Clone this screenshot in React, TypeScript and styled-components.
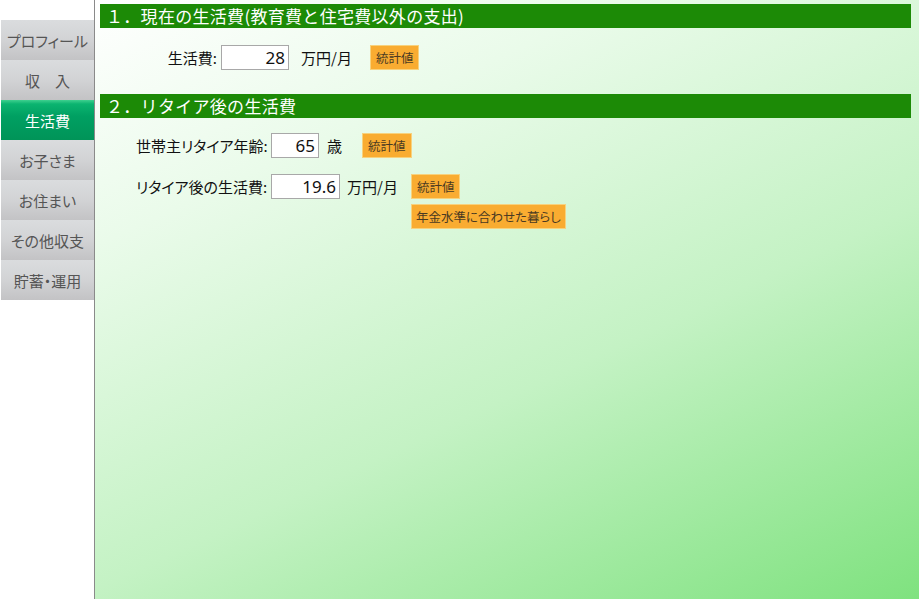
import React from "react";
import styled, { createGlobalStyle } from "styled-components";

const GlobalStyle = createGlobalStyle`
  html, body {
    margin: 0;
    padding: 0;
    height: 100%;
  }
  body {
    font-family: "Noto Sans CJK JP", "Noto Sans", sans-serif;
    background: #ffffff;
  }
`;

const Page = styled.div`
  display: flex;
  width: 919px;
  height: 599px;
  overflow: hidden;
`;

const Sidebar = styled.nav`
  width: 95px;
  padding-top: 20px;
  padding-left: 1px;
  box-sizing: border-box;
  border-right: 1px solid #8a8a8a;
  display: flex;
  flex-direction: column;
`;

const NavItem = styled.div<{ $active?: boolean }>`
  height: 40px;
  display: flex;
  align-items: center;
  justify-content: center;
  font-size: 15px;
  font-feature-settings: "palt";
  color: ${(p) => (p.$active ? "#ffffff" : "#555555")};
  background: ${(p) =>
    p.$active
      ? "linear-gradient(to bottom, #3fd08f 0%, #0bb470 10%, #00a062 40%, #009458 100%)"
      : "linear-gradient(to bottom, #dadcde 0%, #d2d3d5 50%, #c3c3c5 100%)"};
`;

const Main = styled.main`
  flex: 1;
  padding: 4px 8px 0 5px;
  background: linear-gradient(
    155deg,
    #ffffff 0%,
    #eafbea 25%,
    #c4f2c4 60%,
    #7fe27f 100%
  );
`;

const Header = styled.h2<{ $top: number }>`
  margin: ${(p) => p.$top}px 0 0;
  height: 24px;
  line-height: 24px;
  padding-left: 6px;
  background: #1c8a06;
  color: #ffffff;
  font-size: 17px;
  letter-spacing: 0.3px;
  font-weight: normal;
  white-space: nowrap;
`;

const Row = styled.div<{ $indent: number; $top: number }>`
  display: flex;
  align-items: flex-start;
  margin-top: ${(p) => p.$top}px;
  padding-left: ${(p) => p.$indent}px;
`;

const Label = styled.span<{ $w: number }>`
  width: ${(p) => p.$w}px;
  text-align: right;
  font-size: 15px;
  font-feature-settings: "palt";
  color: #111;
  line-height: 26px;
  margin-right: 4px;
  white-space: nowrap;
`;

const NumInput = styled.input<{ $w: number }>`
  width: ${(p) => p.$w}px;
  height: 25px;
  box-sizing: border-box;
  border: 1px solid #a8a8a8;
  background: #ffffff;
  text-align: right;
  font-family: "Noto Sans", "Noto Sans CJK JP", sans-serif;
  font-size: 17px;
  color: #111;
  padding: 0 3px 0 0;
  outline: none;
`;

const Unit = styled.span<{ $gap: number; $after: number }>`
  font-size: 15px;
  color: #111;
  line-height: 26px;
  margin-left: ${(p) => p.$gap}px;
  margin-right: ${(p) => p.$after}px;
  white-space: nowrap;
`;

const Buttons = styled.div`
  display: flex;
  flex-direction: column;
  align-items: flex-start;
  gap: 5px;
`;

const StatButton = styled.button`
  height: 25px;
  box-sizing: border-box;
  padding: 0 5px;
  border: 1px solid #f7d27e;
  background: #f9ac31;
  color: #4a3a22;
  font-family: "Noto Sans CJK JP", sans-serif;
  font-size: 12.5px;
  cursor: pointer;
  white-space: nowrap;
`;

const WideButton = styled(StatButton)`
  font-size: 12.5px;
  font-feature-settings: "palt";
  padding: 0 4px;
`;

const menu = ["プロフィール", "収　入", "生活費", "お子さま", "お住まい", "その他収支", "貯蓄・運用"];

export default function App() {
  return (
    <>
      <GlobalStyle />
      <Page>
        <Sidebar>
          {menu.map((m) => (
            <NavItem key={m} $active={m === "生活費"}>
              {m}
            </NavItem>
          ))}
        </Sidebar>
        <Main>
          <Header $top={0}>１．現在の生活費(教育費と住宅費以外の支出)</Header>
          <Row $indent={0} $top={17}>
            <Label $w={117}>生活費:</Label>
            <NumInput $w={68} defaultValue="28" />
            <Unit $gap={12} $after={18}>万円/月</Unit>
            <Buttons>
              <StatButton>統計値</StatButton>
            </Buttons>
          </Row>

          <Header $top={23}>２．リタイア後の生活費</Header>
          <Row $indent={36} $top={15}>
            <Label $w={131}>世帯主リタイア年齢:</Label>
            <NumInput $w={48} defaultValue="65" />
            <Unit $gap={8} $after={20}>歳</Unit>
            <Buttons>
              <StatButton>統計値</StatButton>
            </Buttons>
          </Row>
          <Row $indent={36} $top={15}>
            <Label $w={131}>リタイア後の生活費:</Label>
            <NumInput $w={69} defaultValue="19.6" />
            <Unit $gap={7} $after={13}>万円/月</Unit>
            <Buttons>
              <StatButton>統計値</StatButton>
              <WideButton>年金水準に合わせた暮らし</WideButton>
            </Buttons>
          </Row>
        </Main>
      </Page>
    </>
  );
}
